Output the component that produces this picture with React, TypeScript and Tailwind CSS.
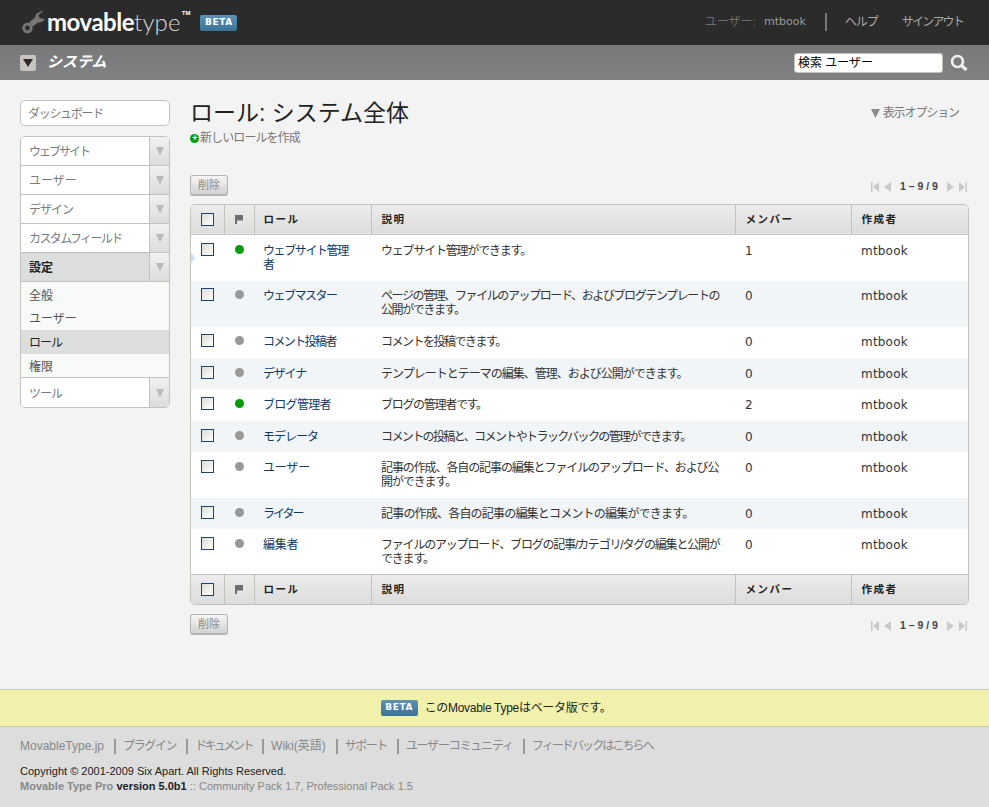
import React from 'react';

const jp = 'font-["Liberation_Sans","Noto_Sans_CJK_JP",sans-serif]';

type Role = { name: string; nameCls: string; desc: React.ReactNode; descCls: string; members: number; active: boolean; h: string };

const roles: Role[] = [
  { name: 'ウェブサイト管理者', nameCls: 'tracking-[-1.4px]', desc: 'ウェブサイト管理ができます。', descCls: 'tracking-[-1.2px]', members: 1, active: true, h: 'h-[47px]' },
  { name: 'ウェブマスター', nameCls: 'tracking-[-1.5px]', desc: <>ページの管理、ファイルのアップロード、およびブログテンプレートの<br />公開ができます。</>, descCls: 'tracking-[-1.4px]', members: 0, active: false, h: 'h-[46px]' },
  { name: 'コメント投稿者', nameCls: 'tracking-[-1.6px]', desc: 'コメントを投稿できます。', descCls: 'tracking-[-1.5px]', members: 0, active: false, h: 'h-[31px]' },
  { name: 'デザイナ', nameCls: 'tracking-[-1.2px]', desc: 'テンプレートとテーマの編集、管理、および公開ができます。', descCls: 'tracking-[-1px]', members: 0, active: false, h: 'h-[31px]' },
  { name: 'ブログ管理者', nameCls: 'tracking-[-0.7px]', desc: 'ブログの管理者です。', descCls: 'tracking-[-1.3px]', members: 2, active: true, h: 'h-[32px]' },
  { name: 'モデレータ', nameCls: 'tracking-[-1px]', desc: 'コメントの投稿と、コメントやトラックバックの管理ができます。', descCls: 'tracking-[-1.6px]', members: 0, active: false, h: 'h-[31px]' },
  { name: 'ユーザー', nameCls: 'tracking-[-0.2px]', desc: <>記事の作成、各自の記事の編集とファイルのアップロード、および公<br />開ができます。</>, descCls: 'tracking-[-1.1px]', members: 0, active: false, h: 'h-[46px]' },
  { name: 'ライター', nameCls: 'tracking-[-2px]', desc: '記事の作成、各自の記事の編集とコメントの編集ができます。', descCls: 'tracking-[-0.8px]', members: 0, active: false, h: 'h-[31px]' },
  { name: '編集者', nameCls: 'tracking-[-0.2px]', desc: <>ファイルのアップロード、ブログの記事/カテゴリ/タグの編集と公開が<br />できます。</>, descCls: 'tracking-[-1.2px]', members: 0, active: false, h: 'h-[45px]' },
];

const footerLinks = [
  { label: 'MovableType.jp', cls: '' },
  { label: 'プラグイン', cls: 'tracking-[-1.4px]' },
  { label: 'ドキュメント', cls: 'tracking-[-2.5px]' },
  { label: 'Wiki(英語)', cls: '' },
  { label: 'サポート', cls: 'tracking-[-1.5px]' },
  { label: 'ユーザーコミュニティ', cls: 'tracking-[-1.2px]' },
  { label: 'フィードバックはこちらへ', cls: 'tracking-[-1.9px]' },
];

const Arrow = () => (
  <span className="w-[20px] shrink-0 self-stretch border-l border-[#c6c1bb] bg-gradient-to-b from-[#f1f1f1] to-[#dcdcdc] flex items-center justify-center">
    <svg width="10" height="10" viewBox="0 0 10 10"><path d="M1 1h8L5 9.5z" fill="#b9b9b9" /></svg>
  </span>
);

const MenuItem = ({ label, cls = '', selected }: { label: string; cls?: string; selected?: boolean }) => (
  <div className={`flex h-[29px] items-stretch border-b border-[#c6c1bb] ${selected ? 'bg-[#dcdedd]' : 'bg-white'}`}>
    <span className={`flex-1 pl-2 pt-[2px] text-[12px] flex items-center ${cls} ${selected ? 'font-bold text-[#222]' : 'text-[#7b7b7b]'}`}>{label}</span>
    <Arrow />
  </div>
);

const Checkbox = () => (
  <span className="inline-block w-[13px] h-[13px] border border-[#1c4571] bg-gradient-to-br from-[#dcdcd8] to-white align-top" />
);

const Flag = () => (
  <svg width="8" height="9" viewBox="0 0 8 9" className="block mx-auto"><path d="M0 0h8v5.500H2V9H0z" fill="#6e6e6e" /></svg>
);

const Pager = ({ cls }: { cls: string }) => (
  <div className={`flex items-center justify-end h-[14px] pr-[2px] text-[10.5px] font-bold text-[#444] ${cls}`}>
    <svg width="8" height="10" viewBox="0 0 8 10"><path d="M0 0h1.500v10H0zM8 0v10L2 5z" fill="#c9c9c9" /></svg>
    <svg width="7" height="10" viewBox="0 0 7 10" className="ml-[5px]"><path d="M7 0v10L0 5z" fill="#c9c9c9" /></svg>
    <span className="mx-[9px] w-[38px] text-center whitespace-nowrap">1 – 9 / 9</span>
    <svg width="7" height="10" viewBox="0 0 7 10"><path d="M0 0v10l7-5z" fill="#c9c9c9" /></svg>
    <svg width="8" height="10" viewBox="0 0 8 10" className="ml-[5px]"><path d="M6.500 0H8v10H6.500zM0 0v10l6-5z" fill="#c9c9c9" /></svg>
  </div>
);

const DeleteButton = () => (
  <button className="block w-[38px] h-[21px] rounded-[3px] border border-b-2 border-[#b5b5b1] bg-gradient-to-b from-[#f6f6f6] to-[#d2d2d2] text-[11px] leading-none text-[#8a8a8a]">
    削除
  </button>
);

const HeadRow = ({ top }: { top?: boolean }) => {
  const pad = top ? 'pt-[2px]' : 'pt-[1px]';
  return (
    <tr className={`bg-gradient-to-b from-[#ececec] to-[#dddddd] text-[10.5px] font-bold tracking-[1.5px] text-[#222] ${top ? 'h-[29px] border-b border-[#c6c1bb]' : 'h-[30px]'}`}>
      <th className="border-r border-[#c6c1bb]"><div className="flex justify-center"><Checkbox /></div></th>
      <th className="border-r border-[#c6c1bb]"><Flag /></th>
      <th className={`border-r border-[#c6c1bb] pl-[9px] text-left ${pad}`}>ロール</th>
      <th className={`border-r border-[#c6c1bb] pl-[10px] text-left ${pad}`}>説明</th>
      <th className={`border-r border-[#c6c1bb] pl-[10px] text-left ${pad}`}>メンバー</th>
      <th className={`pl-[10px] text-left ${pad}`}>作成者</th>
    </tr>
  );
};

export default function App() {
  return (
    <div className={`w-[989px] h-[807px] overflow-hidden bg-[#f3f3f3] ${jp}`}>
      {/* top bar */}
      <header className="h-[45px] bg-[#2b2b2b] flex items-center pl-[22px] pr-[26px]">
        <svg width="24" height="24" viewBox="0 0 24 24" className="mt-[-2px]">
          <path d="M21.500 1C17 1.500 13.500 3.500 13 7.500L7 12.500 11 16.500 16 12.500C19 13 21.500 11.500 22.500 9L17.500 8 16.500 5z" fill="#777" />
          <circle cx="5.500" cy="18" r="3.800" fill="none" stroke="#777" strokeWidth="2.800" />
        </svg>
        <span className="ml-[1px] mt-[-1px] text-[24px] leading-none text-white font-['Lato',sans-serif]">
          <span className="font-bold tracking-[-0.5px]">movable</span><span className="font-light text-[#d8d8d8] tracking-[0.2px]">type</span>
        </span>
        <span className="self-start mt-[9px] ml-[1px] text-[6px] font-bold text-white">TM</span>
        <span className="ml-[10px] mt-[1px] w-[37px] h-[16px] rounded-[2px] bg-gradient-to-b from-[#5c93b6] to-[#3a7297] text-white text-[9px] font-bold tracking-[0.6px] flex items-center justify-center font-['DejaVu_Sans',sans-serif]">BETA</span>
        <div className="ml-auto flex items-center text-[12px] mt-[-1px]">
          <span className="text-[#6f6f6f]">ユーザー:</span>
          <span className="ml-[8px] text-[#9a9a9a] font-['DejaVu_Sans',sans-serif] text-[11px]">mtbook</span>
          <span className="ml-[19px] w-[2px] h-[18px] bg-[#777]" />
          <span className="ml-[18px] text-[#a8a8a8] tracking-[-1px]">ヘルプ</span>
          <span className="ml-[24px] text-[#a8a8a8] tracking-[-1.8px]">サインアウト</span>
        </div>
      </header>

      {/* system bar */}
      <div className="h-[35px] bg-gradient-to-b from-[#78797a] to-[#808182] flex items-center pl-[20px] pr-[21px]">
        <span className="w-[16px] h-[16px] rounded-[2px] bg-[#c9c5c0] flex items-center justify-center">
          <svg width="10" height="8" viewBox="0 0 10 8"><path d="M0 0h10L5 8z" fill="#2b2b2b" /></svg>
        </span>
        <span className="ml-[11px] text-[15px] font-bold italic text-white">システム</span>
        <div className="ml-auto flex items-center">
          <div className="w-[149px] h-[20px] rounded-[3px] border border-[#c6c1bb] bg-white pl-[3px] text-[12px] leading-[18px] text-black">検索 ユーザー</div>
          <svg width="18" height="18" viewBox="0 0 18 18" className="ml-[7px]">
            <circle cx="7.500" cy="7.500" r="5.500" fill="none" stroke="#f0f0f0" strokeWidth="2.600" />
            <path d="M11.500 11.500L16.500 16" stroke="#f0f0f0" strokeWidth="3.200" />
          </svg>
        </div>
      </div>

      {/* body */}
      <div className="h-[609px] flex pl-[20px] pr-[20px] pt-[20px]">
        <aside className="w-[150px] shrink-0">
          <div className="h-[26px] rounded-[5px] border border-[#c6c1bb] bg-white pl-[7px] text-[12px] tracking-[-1.3px] leading-[26px] text-[#7b7b7b]">ダッシュボード</div>
          <nav className="mt-[10px] rounded-[5px] border border-[#c6c1bb] overflow-hidden">
            <MenuItem label="ウェブサイト" cls="tracking-[-2px]" />
            <MenuItem label="ユーザー" />
            <MenuItem label="デザイン" cls="tracking-[-1px]" />
            <MenuItem label="カスタムフィールド" cls="tracking-[-1.6px]" />
            <MenuItem label="設定" selected />
            <div className="bg-[#f8faf7] border-b border-[#c6c1bb] text-[12px] text-[#555]">
              <div className="h-[24px] pl-2 pt-[3px] flex items-center">全般</div>
              <div className="h-[24px] pl-2 pt-[2px] flex items-center">ユーザー</div>
              <div className="h-[24px] pl-2 pt-[2px] flex items-center bg-[#dcdedd] text-[#222] tracking-[-1px]">ロール</div>
              <div className="h-[23px] pl-2 pt-[2px] flex items-center">権限</div>
            </div>
            <div className="flex h-[29px] items-stretch bg-white">
              <span className="flex-1 pl-2 pt-[2px] text-[12px] flex items-center text-[#7b7b7b] tracking-[-1px]">ツール</span>
              <Arrow />
            </div>
          </nav>
        </aside>

        <main className="flex-1 ml-[20px] min-w-0">
          <div className="mt-[1px] flex justify-between">
            <h1 className="text-[23px] leading-[24px] text-[#222] whitespace-nowrap">ロール: システム全体</h1>
            <span className="mt-[3px] mr-[10px] flex items-center self-start text-[12px] leading-[18px] tracking-[-1.1px] text-[#777]">
              <svg width="9" height="9" viewBox="0 0 9 9" className="mr-[3px]"><path d="M0 0h9L4.500 9z" fill="#8c8c8c" /></svg>
              表示オプション
            </span>
          </div>
          <div className="mt-[4px] h-[18px] flex items-center text-[12px] text-[#777] tracking-[-0.9px]">
            <span className="w-[9px] h-[9px] rounded-full bg-[#0a9a0a] text-white text-[9px] leading-[9px] font-bold flex items-center justify-center">+</span>
            <span className="ml-[1px]">新しいロールを作成</span>
          </div>

          <div className="mt-[28px] flex items-center justify-between h-[21px]">
            <DeleteButton />
            <Pager cls="mt-[3px]" />
          </div>

          <div className="mt-[8px] rounded-[5px] border border-[#c6c1bb] overflow-hidden bg-white">
            <table className="w-full table-fixed border-collapse">
              <colgroup>
                <col className="w-[33px]" />
                <col className="w-[30px]" />
                <col className="w-[117px]" />
                <col className="w-[364px]" />
                <col className="w-[116px]" />
                <col />
              </colgroup>
              <thead><HeadRow top /></thead>
              <tbody className="text-[12px] leading-[14px] text-[#333]">
                {roles.map((r, i) => {
                  // rows sit a pixel lower in their band here
                  const low = i === 0 || i >= 3;
                  const pad = low ? 'pt-[9px]' : 'pt-[8px]';
                  return (
                    <tr key={r.name} className={`${r.h} align-top ${i % 2 === 1 ? 'bg-[#f1f5f8]' : 'bg-white'}`}>
                      <td className={`relative text-center ${low ? 'pt-[8px]' : 'pt-[7px]'}`}>
                        {i === 0 && (
                          <svg width="4" height="10" viewBox="0 0 4 10" className="absolute left-0 top-[18px]"><path d="M0 0l4 5-4 5z" fill="#cfdde8" /></svg>
                        )}
                        <Checkbox />
                      </td>
                      <td className={`text-center ${low ? 'pt-[10px]' : 'pt-[9px]'}`}>
                        <span className={`inline-block w-[9px] h-[9px] rounded-full align-top ${r.active ? 'bg-[#0a9a0a]' : 'bg-[#999999]'}`} />
                      </td>
                      <td className={`pl-[9px] pr-[14px] text-[#0f3a66] ${pad} ${r.nameCls}`}>{r.name}</td>
                      <td className={`pl-[10px] pr-[5px] whitespace-nowrap ${pad} ${r.descCls}`}>{r.desc}</td>
                      <td className={`pl-[10px] font-['DejaVu_Sans',sans-serif] text-[12px] tracking-[0.2px] ${pad}`}>{r.members}</td>
                      <td className={`pl-[10px] font-['DejaVu_Sans',sans-serif] text-[12px] tracking-[0.2px] ${pad}`}>mtbook</td>
                    </tr>
                  );
                })}
              </tbody>
              <tfoot className="border-t border-[#c6c1bb]"><HeadRow /></tfoot>
            </table>
          </div>

          <div className="mt-[9px] flex items-center justify-between h-[21px]">
            <DeleteButton />
            <Pager cls="mt-[2px]" />
          </div>
        </main>
      </div>

      {/* beta notice */}
      <div className="h-[38px] border-y border-[#c9c9c0] bg-[#f1f1ab] flex items-center justify-center pl-[3px] text-[12px] text-[#222]">
        <span className="w-[37px] h-[16px] rounded-[2px] bg-gradient-to-b from-[#5c93b6] to-[#3a7297] text-white text-[9px] font-bold tracking-[0.6px] flex items-center justify-center font-['DejaVu_Sans',sans-serif]">BETA</span>
        <span className="ml-[7px] tracking-[-0.3px]">このMovable Typeはベータ版です。</span>
      </div>

      {/* footer */}
      <footer className="h-[80px] bg-[#dcdddc] pl-[20px] pt-[10px]">
        <div className="flex items-center h-[18px] text-[12px] text-[#888]">
          {footerLinks.map((l, i) => (
            <span key={l.label} className={`leading-[15px] whitespace-nowrap ${l.cls} ${i > 0 ? 'ml-[10px] pl-[7px] border-l-2 border-[#999]' : ''}`}>{l.label}</span>
          ))}
        </div>
        <div className="mt-[9px] text-[11px] leading-[15px] text-[#222]">Copyright © 2001-2009 Six Apart. All Rights Reserved.</div>
        <div className="text-[11px] leading-[15px] text-[#888]">
          <b>Movable Type Pro</b> <b className="text-[#222]">version 5.0b1</b> :: Community Pack 1.7, Professional Pack 1.5
        </div>
      </footer>
    </div>
  );
}
